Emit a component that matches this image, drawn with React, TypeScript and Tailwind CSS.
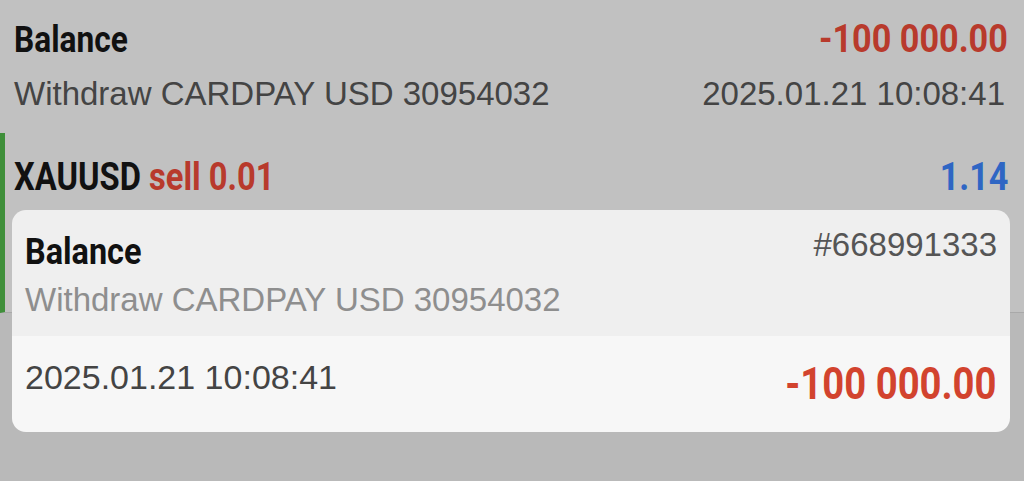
import React from "react";

const cond = { fontFamily: 'Roboto, "Liberation Sans", sans-serif' } as React.CSSProperties;

export default function App() {
  return (
    <div className="relative w-[1024px] h-[481px] overflow-hidden bg-[#b9b9b9]" style={{ fontFamily: '"Liberation Sans", Arial, sans-serif' }}>
      <div className="bg-[#c1c1c1]">
        <div className="h-[133px] pl-[14px] pr-[16px] pt-[18px]">
          <div className="flex items-baseline justify-between">
            <span className="inline-block origin-left scale-x-[0.88] font-bold text-[36px] leading-[42px] text-[#111]" style={cond}>Balance</span>
            <span className="inline-block origin-right scale-x-[0.9] font-bold text-[38px] leading-[42px] text-[#b83a2c]" style={cond}>-100 000.00</span>
          </div>
          <div className="flex items-baseline justify-between mt-[14px] pr-[3px]">
            <span className="text-[33px] leading-[38px] text-[#444]">Withdraw CARDPAY USD 30954032</span>
            <span className="text-[33px] leading-[38px] text-[#444]">2025.01.21 10:08:41</span>
          </div>
        </div>
        <div className="h-[180px] border-l-[5px] border-[#3f8f3a] border-b border-b-[#a9a9a9] pl-[9px] pr-[16px] pt-[22px]">
          <div className="flex items-baseline justify-between">
            <span className="inline-block origin-left scale-x-[0.86] font-bold text-[38px] leading-[44px]" style={cond}>
              <span className="text-[#111]">XAUUSD</span> <span className="text-[#b83a2c]">sell 0.01</span>
            </span>
            <span className="inline-block origin-right scale-x-[0.9] font-bold text-[38px] leading-[44px] text-[#2f66c4]" style={cond}>1.14</span>
          </div>
        </div>
      </div>
      <div className="absolute left-[12px] top-[210px] w-[998px] h-[222px] rounded-[14px] overflow-hidden">
        <div className="h-[126px] bg-[#efefef] pl-[13px] pr-[13px] pt-[21px]">
          <div className="flex items-start justify-between">
            <span className="inline-block origin-left scale-x-[0.9] font-bold text-[36px] leading-[42px] text-[#111]" style={cond}>Balance</span>
            <span className="text-[33px] leading-[38px] text-[#555] -mt-[5px]">#668991333</span>
          </div>
          <div className="text-[33px] leading-[38px] text-[#8e8e8e] mt-[8px]">Withdraw CARDPAY USD 30954032</div>
        </div>
        <div className="h-[96px] bg-[#f7f7f7] pl-[13px] pr-[13px] pt-[21px] flex items-start justify-between">
          <span className="text-[34px] leading-[40px] text-[#444]">2025.01.21 10:08:41</span>
          <span className="inline-block origin-right scale-x-[0.85] font-bold text-[45px] leading-[50px] text-[#d2432e] mt-[2px]" style={cond}>-100 000.00</span>
        </div>
      </div>
    </div>
  );
}
